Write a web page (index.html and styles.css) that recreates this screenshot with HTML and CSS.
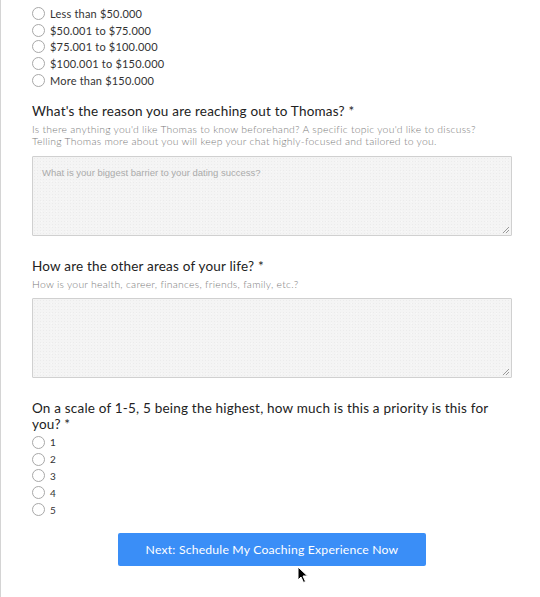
FILE: index.html
```html
<!DOCTYPE html>
<html>
<head>
<meta charset="utf-8">
<link rel="stylesheet" href="styles.css">
</head>
<body>
<div class="page">
  <div class="options income">
    <label class="opt"><span class="radio"></span>Less than $50.000</label>
    <label class="opt"><span class="radio"></span>$50.001 to $75.000</label>
    <label class="opt"><span class="radio"></span>$75.001 to $100.000</label>
    <label class="opt"><span class="radio"></span>$100.001 to $150.000</label>
    <label class="opt"><span class="radio"></span>More than $150.000</label>
  </div>

  <div class="field f1">
    <div class="q">What's the reason you are reaching out to Thomas? *</div>
    <div class="desc">Is there anything you'd like Thomas to know beforehand? A specific topic you'd like to discuss?<br>Telling Thomas more about you will keep your chat highly-focused and tailored to you.</div>
    <div class="ta"><span class="ph">What is your biggest barrier to your dating success?</span><span class="grip"></span></div>
  </div>

  <div class="field f2">
    <div class="q">How are the other areas of your life? *</div>
    <div class="desc">How is your health, career, finances, friends, family, etc.?</div>
    <div class="ta"><span class="grip"></span></div>
  </div>

  <div class="field f3">
    <div class="q">On a scale of 1-5, 5 being the highest, how much is this a priority is this for you? *</div>
    <div class="options scale">
      <label class="opt"><span class="radio"></span>1</label>
      <label class="opt"><span class="radio"></span>2</label>
      <label class="opt"><span class="radio"></span>3</label>
      <label class="opt"><span class="radio"></span>4</label>
      <label class="opt"><span class="radio"></span>5</label>
    </div>
  </div>

  <div class="actions">
    <button class="btn">Next: Schedule My Coaching Experience Now</button>
  </div>

  <svg class="cursor" width="12" height="18" viewBox="0 0 12 18"><path d="M1 1 L1 14 L4 11 L6.5 16.5 L8.5 15.5 L6 10 L10.5 10 Z" fill="#000" stroke="#fff" stroke-width="1"/></svg>
</div>
</body>
</html>
```

FILE: styles.css
```css
html, body { margin: 0; padding: 0; background: #fff; }
body { font-family: Lato, "Open Sans", sans-serif; color: #333; }
.page {
  position: relative;
  width: 540px;
  height: 597px;
  box-sizing: border-box;
  border-left: 1px solid #d4d4d4;
  padding: 5px 29px 0 31px;
  overflow: hidden;
}
.options { display: flex; flex-direction: column; }
.opt {
  display: flex;
  align-items: center;
  height: 16.8px;
  font-size: 11px;
  color: #333;
  letter-spacing: 0.2px;
}
.radio {
  width: 11px;
  height: 11px;
  border: 1px solid #a8a8a8;
  border-radius: 50%;
  background: #fff;
  margin-right: 5px;
  flex: none;
}
.field { display: flex; flex-direction: column; }
.f1 { margin-top: 14px; }
.f2 { margin-top: 22px; }
.f3 { margin-top: 22px; }
.q {
  font-size: 13.5px;
  line-height: 16px;
  color: #222;
  letter-spacing: 0.2px;
}
.desc {
  margin-top: 4px;
  font-size: 10.4px;
  font-weight: 300;
  line-height: 12px;
  color: #7a7a7a;
  letter-spacing: 0.25px;
}
.ta {
  position: relative;
  margin-top: 9px;
  height: 78px;
  width: 478px;
  border: 1px solid #d0d0d0;
  border-radius: 1px;
  background-color: #f4f4f4;
  background-image: radial-gradient(#ebebeb 0.5px, transparent 0.6px), radial-gradient(#f9f9f9 0.5px, transparent 0.6px);
  background-size: 3px 3px, 5px 5px;
  background-position: 0 0, 1px 2px;
}
.f2 .ta { margin-top: 8px; }
.ph {
  position: absolute;
  left: 9px;
  top: 10px;
  font-family: "Liberation Sans", Arial, sans-serif;
  font-size: 9.5px;
  color: #aaa;
}
.grip {
  position: absolute;
  right: 2px;
  bottom: 2px;
  width: 6px;
  height: 6px;
  background: linear-gradient(135deg, transparent 45%, #999 45%, #999 55%, transparent 55%, transparent 72%, #999 72%, #999 82%, transparent 82%);
}
.scale { margin-top: 2px; }
.scale .opt { font-size: 10px; }
.actions { display: flex; justify-content: center; margin-top: 15px; padding-left: 1px; }
.btn {
  width: 308px;
  height: 33px;
  border: none;
  border-radius: 2px;
  background: #3a8ef7;
  color: #fff;
  font-family: Lato, "Open Sans", sans-serif;
  font-size: 12.2px;
  letter-spacing: 0.2px;
}
.cursor { position: absolute; left: 296px; top: 566px; }
```
